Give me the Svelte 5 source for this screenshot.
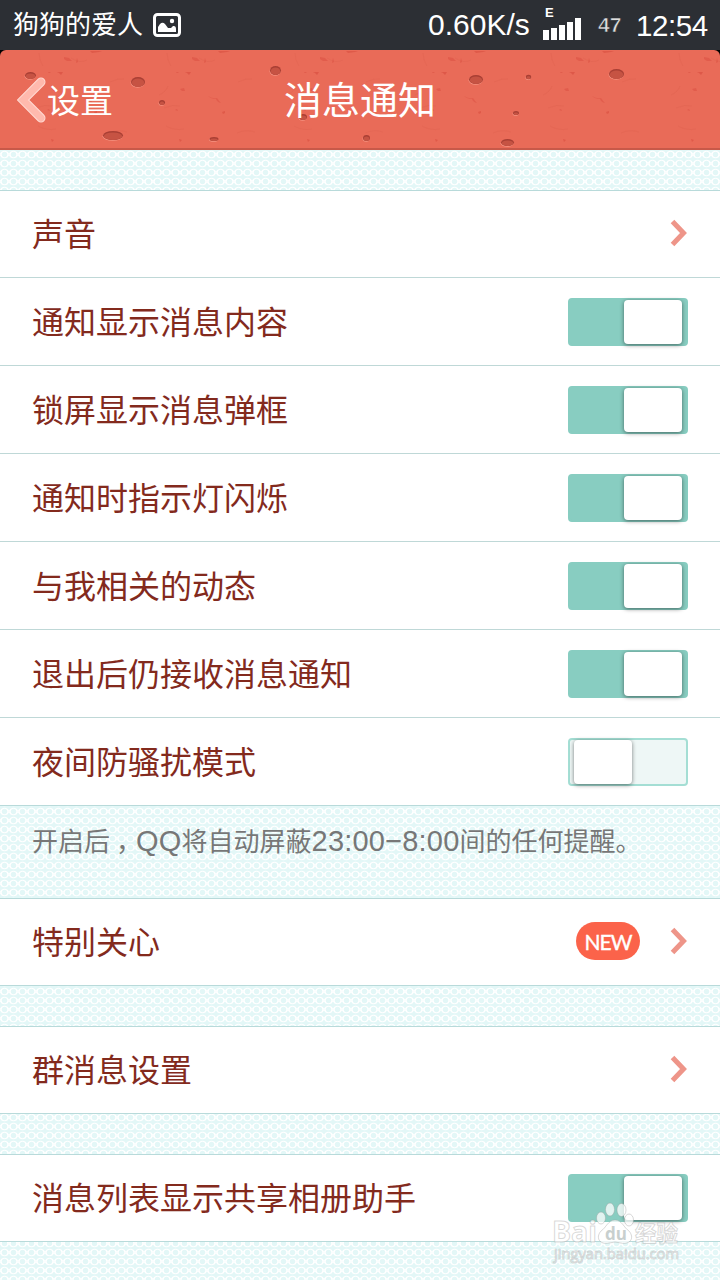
<script>
  let settings = $state([
    { label: '声音', type: 'link' },
    { label: '通知显示消息内容', type: 'toggle', on: true },
    { label: '锁屏显示消息弹框', type: 'toggle', on: true },
    { label: '通知时指示灯闪烁', type: 'toggle', on: true },
    { label: '与我相关的动态', type: 'toggle', on: true },
    { label: '退出后仍接收消息通知', type: 'toggle', on: true },
    { label: '夜间防骚扰模式', type: 'toggle', on: false }
  ]);
  let care = $state([{ label: '特别关心', type: 'link', badge: 'NEW' }]);
  let groups = $state([{ label: '群消息设置', type: 'link' }]);
  let album = $state([{ label: '消息列表显示共享相册助手', type: 'toggle', on: true }]);

  // craters in the header texture: cx, cy, rx, ry
  const craters = [
    [30.5, 25.5, 5.5, 3.5],
    [138, 32, 7, 5],
    [162, 52.5, 3, 2.5],
    [113, 85.5, 10, 4.5],
    [214, 89, 4.5, 2],
    [275.5, 20.5, 5.5, 4.5],
    [303, 67, 4, 3],
    [366.5, 88, 3.5, 3],
    [476, 29.5, 7, 4.5],
    [528.5, 27, 2.7, 2.2],
    [516, 63, 3, 2],
    [507.5, 92.5, 6.5, 3.5],
    [616.5, 24, 7.5, 5]
  ];
  const tiles = [-62, 66, 194, 322, 450, 578, 706];
</script>

{#snippet list(items)}
  <section class="list">
    {#each items as item}
      <div class="row">
        <span class="label">{item.label}</span>
        {#if item.badge}
          <span class="badge">{item.badge}</span>
        {/if}
        {#if item.type === 'toggle'}
          <button
            class="switch"
            class:on={item.on}
            aria-label={item.label}
            onclick={() => (item.on = !item.on)}
          ><span class="knob"></span></button>
        {:else}
          <svg class="arrow" width="18" height="28" viewBox="0 0 18 28">
            <path d="M2.500 2.500 L13.500 14 L2.500 25.500" />
          </svg>
        {/if}
      </div>
    {/each}
  </section>
{/snippet}

<div class="screen">
  <div class="status">
    <span class="carrier">狗狗的爱人</span>
    <svg class="photo" width="28" height="24" viewBox="0 0 28 24">
      <rect x="1.5" y="1.5" width="25" height="21" rx="3" fill="none" stroke="#fff" stroke-width="3" />
      <path d="M5 19 V14 L7 11 Q9.500 8.500 12 11 L15 15 L18 15 L20 13 Q23 12.500 23 16 V19 Z" fill="#fff" />
      <circle cx="19" cy="8" r="2.200" fill="#fff" />
    </svg>
    <span class="speed">0.60K/s</span>
    <div class="signal">
      <span class="network">E</span>
      <svg width="38" height="22" viewBox="0 0 38 22" fill="#fff">
        <rect x="0" y="12" width="6" height="10" />
        <rect x="8" y="10" width="6" height="12" />
        <rect x="16" y="7" width="6" height="15" />
        <rect x="24" y="4" width="6" height="18" />
        <rect x="32" y="0" width="6" height="22" />
      </svg>
    </div>
    <span class="battery">47</span>
    <span class="clock">12:54</span>
  </div>

  <div class="header-wrap">
    <header>
      <svg class="texture" width="720" height="100" viewBox="0 0 720 100">
        {#each tiles as x}
          <g transform="translate({x} 0)" fill="#d94e40">
            <path d="M-2 7 l5 1 l3 3 l-5 0 l-3 -2 z M11 8 l1 4 l-2 1 z" opacity=".5" />
            <path d="M-9 22 l6 0 l-2 3 l-2 -2 z M-18 22 l3 0 l-2 1 z" opacity=".65" />
            <path d="M-14 39 l4 -1 l1 3 l-3 0 z M-19 60 l2 -1 l1 2 z" opacity=".5" />
            <path d="M14 46 q5 3 9 2 q2 3 4 5 q-4 -1 -5 -4 q-5 0 -8 -3 z" opacity=".45" />
            <path d="M28 62 l3 -1 l0 2 l-2 1 z M-15 89 l3 1 l-2 2 z M24 1 l12 0 l-3 1 l-7 1 z" opacity=".6" />
            <path
              d="M-27 3 q0 7 4 13 M5 8 q9 6 16 2 M-35 45 q7 -3 9 -9 M-30 58 q9 -4 16 -2 M-28 76 q9 5 18 3 M43 83 q9 -4 18 -1 M44 32 q8 -4 14 -3"
              fill="none"
              stroke="#d75c4b"
              opacity=".22"
            />
          </g>
        {/each}
        {#each craters as [cx, cy, rx, ry]}
          <ellipse cx={cx - 0.4} cy={cy + 0.8} {rx} {ry} fill="#f59482" />
          <ellipse {cx} {cy} {rx} {ry} fill="#a93f34" />
          <ellipse {cx} cy={cy + 0.7} rx={rx - 0.8} ry={ry - 0.8} fill="#c65343" />
        {/each}
      </svg>
      <a class="back" href="#settings">
        <svg width="30" height="48" viewBox="0 0 30 48">
          <path d="M24 6 L6 24 L24 42" stroke="#ffdcd5" stroke-width="9" />
          <path d="M24 6 L6 24 L24 42" stroke="#ffb9ad" stroke-width="7" />
        </svg>
        <span>设置</span>
      </a>
      <h1>消息通知</h1>
    </header>
  </div>

  <main>
    {@render list(settings)}
    <p class="note">开启后<span class="comma">，</span><span class="latin">QQ</span>将自动屏蔽<span class="latin">23:00−8:00</span>间的任何提醒。</p>
    {@render list(care)}
    {@render list(groups)}
    {@render list(album)}
  </main>

  <svg class="watermark" width="134" height="66" viewBox="0 0 134 66">
    <g fill="#fff" fill-opacity=".75" stroke="#999" stroke-opacity=".38" stroke-width="1">
      <ellipse cx="51" cy="17" rx="4.500" ry="6" />
      <ellipse cx="60" cy="8.500" rx="4.500" ry="6.500" />
      <ellipse cx="71.500" cy="9" rx="4.500" ry="6.500" />
      <ellipse cx="79" cy="19" rx="4.500" ry="6" />
      <path d="M65 19 C72 19 74 27 79 30 C85 37 80 44 71 42 Q65 40 59 42 C50 44 45 37 51 30 C56 27 58 19 65 19 Z" />
      <text x="2" y="41" font-size="28" font-weight="bold" textLength="45" lengthAdjust="spacingAndGlyphs">Bai</text>
      <text x="85" y="40" font-size="22" font-weight="bold" textLength="43" lengthAdjust="spacingAndGlyphs">经验</text>
      <text x="4" y="58" font-size="15" textLength="125" lengthAdjust="spacingAndGlyphs">jingyan.baidu.com</text>
    </g>
    <text class="du" x="55" y="39" font-size="17" font-weight="bold">du</text>
  </svg>
</div>

<style>
  :global(body) {
    margin: 0;
  }

  .screen {
    position: relative;
    width: 720px;
    height: 1280px;
    overflow: hidden;
    font-family: 'Liberation Sans', 'Noto Sans CJK SC', sans-serif;
    background-color: #e3f7f7;
    background-image: url("data:image/svg+xml,%3Csvg xmlns='http://www.w3.org/2000/svg' width='9' height='9'%3E%3Cg fill='none' stroke='white' stroke-width='1.100'%3E%3Ccircle cx='4.500' cy='4.500' r='3.300'/%3E%3Cpath d='M-2 2 L2 7 M-2 7 L2 2 M7 2 L11 7 M7 7 L11 2'/%3E%3C/g%3E%3C/svg%3E");
    background-position: 0 150px;
  }

  .status {
    display: flex;
    align-items: center;
    box-sizing: border-box;
    height: 50px;
    padding: 0 0 0 13px;
    color: #fff;
    background: #2c2f34;
    white-space: nowrap;
  }

  .status > * {
    flex-shrink: 0;
  }

  .carrier {
    width: 140px;
    font-size: 26px;
    line-height: 50px;
  }

  .photo {
    margin-right: 247px;
  }

  .speed {
    width: 115px;
    font-size: 30px;
    line-height: 54px;
  }

  .signal {
    display: flex;
    flex-direction: column;
    width: 55px;
    height: 34px;
    margin-top: -2px;
  }

  .network {
    height: 11px;
    padding-left: 2px;
    font-size: 13px;
    font-weight: bold;
    line-height: 11px;
  }

  .battery {
    width: 38px;
    color: #ddd;
    font-size: 21px;
    font-weight: bold;
    -webkit-text-stroke: 0.6px #2c2f34;
    line-height: 52px;
  }

  .clock {
    font-size: 29.500px;
    letter-spacing: -0.4px;
    line-height: 54px;
    padding-top: 2px;
  }

  .header-wrap {
    background: #000;
  }

  header {
    position: relative;
    display: grid;
    grid-template-columns: 1fr auto 1fr;
    align-items: center;
    box-sizing: border-box;
    height: 100px;
    overflow: hidden;
    color: #fff;
    background: #e96b58;
    border-bottom: 2px solid #c85949;
    border-radius: 6px 6px 0 0;
  }

  .texture {
    position: absolute;
    inset: 0;
  }

  .back {
    position: relative;
    display: flex;
    align-items: center;
    padding: 0 0 0 17px;
    color: #fff;
    font-size: 33px;
    text-decoration: none;
  }

  .back svg {
    margin-top: 2px;
  }

  .back path {
    fill: none;
    stroke-linecap: round;
  }

  h1 {
    position: relative;
    margin: 0;
    padding-bottom: 4px;
    font-size: 38px;
    font-weight: normal;
  }

  main {
    padding-top: 40px;
  }

  .list {
    margin-bottom: 40px;
    border-top: 1px solid #b8dada;
  }

  .row {
    display: flex;
    align-items: center;
    box-sizing: border-box;
    height: 88px;
    padding: 0 32px;
    color: #832a1d;
    background: #fff;
    border-bottom: 1px solid #bfd8d7;
  }

  .row:first-child {
    height: 87px;
  }

  .row:last-child {
    border-color: #b8dada;
  }

  .label {
    flex: 1;
    padding-bottom: 4px;
    font-size: 32px;
  }

  .arrow {
    margin: -3px 0 0 30px;
  }

  .arrow path {
    fill: none;
    stroke: #ee9589;
    stroke-width: 5;
  }

  .badge {
    width: 64px;
    height: 38px;
    margin-top: -2px;
    border-radius: 19px;
    background: #fb634a;
    color: #fff;
    font-family: Lato, sans-serif;
    font-size: 21px;
    letter-spacing: -1px;
    line-height: 39px;
    text-align: center;
    -webkit-text-stroke: 0.4px #fff;
  }

  .switch {
    box-sizing: border-box;
    width: 120px;
    height: 48px;
    padding: 0 0 0 4px;
    border: 2px solid #a4ded4;
    border-radius: 4px;
    background: #eef7f6;
  }

  .switch.on {
    padding-left: 54px;
    border-color: #88cdc1;
    background: #88cdc1;
  }

  .knob {
    display: block;
    width: 58px;
    height: 44px;
    border-radius: 4px;
    background: #fff;
    box-shadow: 0 1px 4px rgba(0, 0, 0, 0.5);
  }

  .note {
    box-sizing: border-box;
    height: 92px;
    margin: -40px 0 0;
    padding: 16px 32px 0;
    color: #777;
    font-size: 26px;
    line-height: 38px;
    white-space: nowrap;
  }

  .comma {
    position: relative;
    left: 6px;
  }

  .latin {
    font-size: 29px;
    letter-spacing: 0.2px;
  }

  .watermark {
    position: absolute;
    top: 1201px;
    left: 550px;
    font-family: 'Open Sans', 'Noto Sans CJK SC', sans-serif;
  }

  .du {
    fill: #c8cfce;
  }
</style>
